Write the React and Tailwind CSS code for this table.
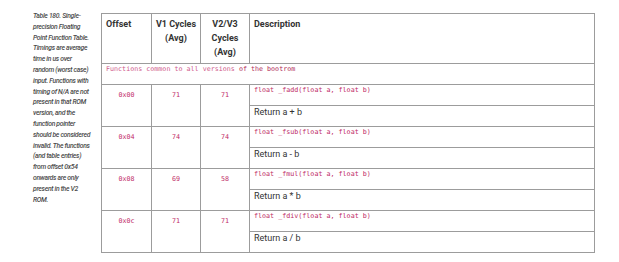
const rows = [
  { off: '0x00', v1: '71', v2: '71', fn: 'float _fadd(float a, float b)', ret: 'Return a + b' },
  { off: '0x04', v1: '74', v2: '74', fn: 'float _fsub(float a, float b)', ret: 'Return a - b' },
  { off: '0x08', v1: '69', v2: '58', fn: 'float _fmul(float a, float b)', ret: 'Return a * b' },
  { off: '0x0c', v1: '71', v2: '71', fn: 'float _fdiv(float a, float b)', ret: 'Return a / b' },
]

const caption = [
  'Table 180. Single-',
  'precision Floating',
  'Point Function Table.',
  'Timings are average',
  'time in us over',
  'random (worst case)',
  'input. Functions with',
  'timing of N/A are not',
  'present in that ROM',
  'version, and the',
  'function pointer',
  'should be considered',
  'invalid. The functions',
  '(and table entries)',
  'from offset 0x54',
  'onwards are only',
  'present in the V2',
  'ROM.',
]

const cell = 'border border-[#9c9c9c] align-top'
const mono = "font-['DejaVu_Sans_Mono',monospace] text-[6.7px] leading-[10px] text-[#c02a66]"

export default function App() {
  return (
    <div className="w-[619px] h-[262px] bg-white flex font-['Roboto',sans-serif]">
      {/* caption */}
      <div className="w-[101px] pl-[33px] pt-[11px] pr-[4px]">
        {caption.map((line, i) => (
          <div key={i} className="text-[6.8px] leading-[10.8px] italic font-medium text-[#4a4a4a] tracking-[-0.3px] whitespace-nowrap">
            {line}
          </div>
        ))}
      </div>

      <div className="pt-[13px]">
        <table className="border-collapse border border-[#9c9c9c] table-fixed w-[494px] text-[#333]">
          <colgroup>
            <col className="w-[50px]" />
            <col className="w-[49px]" />
            <col className="w-[49px]" />
            <col />
          </colgroup>
          <thead>
            <tr className="h-[50px]">
              <th className={`${cell} text-left font-bold text-[9px] leading-[14px] pl-[4px] pt-[3px]`}>Offset</th>
              <th className={`${cell} text-center font-bold text-[9px] leading-[14px] pt-[3px]`}>V1 Cycles<br />(Avg)</th>
              <th className={`${cell} text-center font-bold text-[9px] leading-[14px] pt-[3px]`}>V2/V3<br />Cycles<br />(Avg)</th>
              <th className={`${cell} text-left font-bold text-[9px] leading-[14px] pl-[4px] pt-[3px]`}>Description</th>
            </tr>
          </thead>
          <tbody>
            <tr className="h-[21px]">
              <td colSpan={4} className={`${cell} align-middle pl-[4px] ${mono}`}>
                <span className="text-[#d05a8c]">Functions common to all versions </span>
                <span className="text-[#b32a58]">of the bootrom</span>
              </td>
            </tr>
            {rows.map((r) => (
              <RowPair key={r.off} r={r} />
            ))}
          </tbody>
        </table>
      </div>
    </div>
  )
}

function RowPair({ r }) {
  return (
    <>
      <tr className="h-[21px]">
        <td rowSpan={2} className={`${cell} text-center pt-[5px] ${mono}`}>{r.off}</td>
        <td rowSpan={2} className={`${cell} text-center pt-[5px] ${mono}`}>{r.v1}</td>
        <td rowSpan={2} className={`${cell} text-center pt-[5px] ${mono}`}>{r.v2}</td>
        <td className={`${cell} align-middle pl-[4px] ${mono}`}>{r.fn}</td>
      </tr>
      <tr className="h-[21px]">
        <td className={`${cell} align-middle pl-[4px] text-[9px] leading-[13px] text-[#333]`}>{r.ret}</td>
      </tr>
    </>
  )
}
